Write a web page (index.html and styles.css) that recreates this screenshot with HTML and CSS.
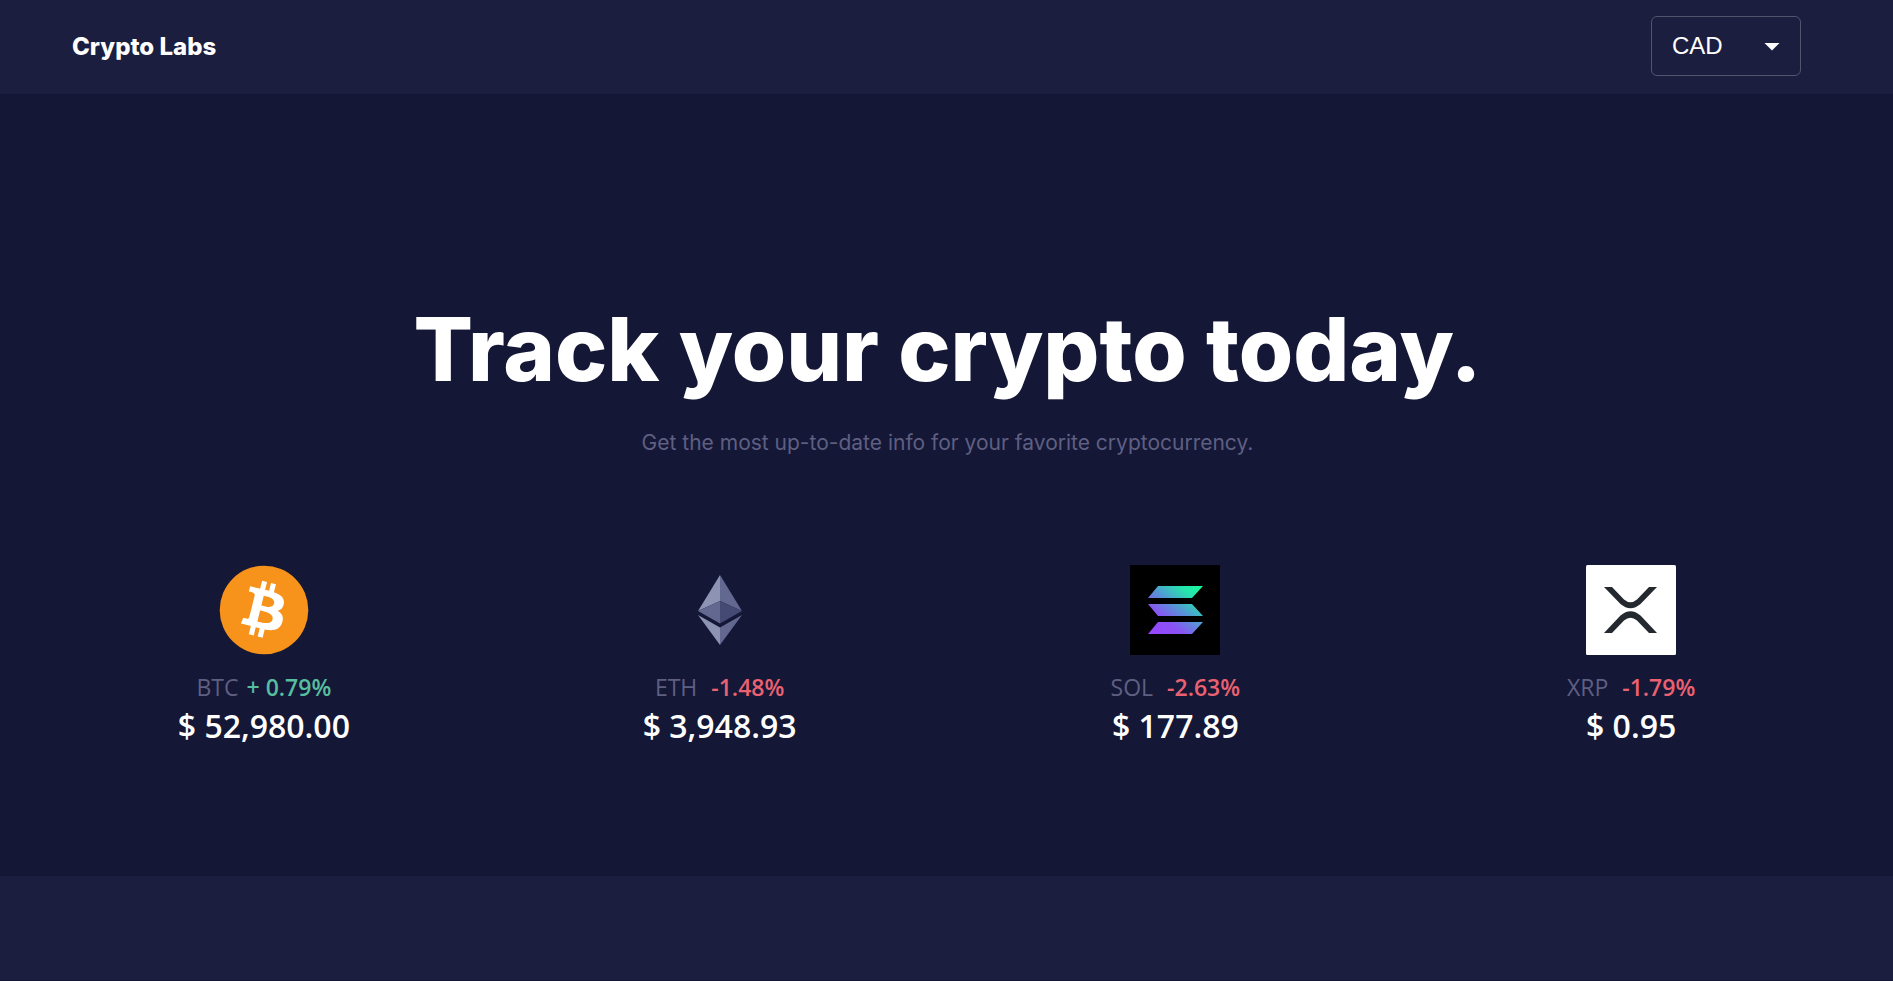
FILE: index.html
```html
<!DOCTYPE html>
<html lang="en">
<head>
<meta charset="utf-8">
<meta name="viewport" content="width=device-width, initial-scale=1">
<title>Crypto Labs</title>
<link rel="stylesheet" href="styles.css">
</head>
<body>
<header class="topbar">
  <a class="brand" href="#">Crypto Labs</a>
  <div class="currency">
    <select class="currency-select" aria-label="Currency">
      <option>CAD</option>
      <option>USD</option>
    </select>
    <svg class="currency-arrow" viewBox="0 0 36 36" aria-hidden="true"><path d="M10.500 15l7.500 7.500 7.500-7.500z" fill="#fff"/></svg>
  </div>
</header>
<main class="hero">
  <h1 class="title">Track your crypto today.</h1>
  <p class="subtitle">Get the most up-to-date info for your favorite cryptocurrency.</p>
  <div class="coins">
    <a class="coin" href="#">
      <svg class="coin-logo" viewBox="0 0 64 64" role="img" aria-label="Bitcoin">
        <circle cx="32" cy="32" r="31.500" fill="#f7931a"/>
        <path fill="#fff" d="M46.103 27.444c.637-4.258-2.605-6.547-7.038-8.074l1.438-5.768-3.511-.875-1.400 5.616c-.923-.230-1.871-.447-2.813-.662l1.410-5.653-3.509-.875-1.439 5.766c-.764-.174-1.514-.346-2.242-.527l.004-.018-4.842-1.209-.934 3.750s2.605.597 2.550.634c1.422.355 1.679 1.296 1.636 2.042l-1.638 6.571c.098.025.225.061.365.117l-.371-.092-2.296 9.205c-.174.432-.615 1.080-1.609.834.035.051-2.552-.637-2.552-.637l-1.743 4.019 4.569 1.139c.850.213 1.683.436 2.503.646l-1.453 5.834 3.507.875 1.439-5.772c.958.260 1.888.500 2.798.726l-1.434 5.745 3.511.875 1.453-5.823c5.987 1.133 10.489.676 12.384-4.739 1.527-4.360-.076-6.875-3.226-8.515 2.294-.529 4.022-2.038 4.483-5.155zM38.081 38.693c-1.085 4.360-8.426 2.003-10.806 1.412l1.928-7.729c2.380.594 10.012 1.770 8.878 6.317zM39.167 27.381c-.990 3.966-7.100 1.951-9.082 1.457l1.748-7.010c1.982.494 8.365 1.416 7.334 5.553z"/>
      </svg>
      <span class="quote quote-up"><span class="symbol">BTC</span> <span class="change">+ 0.79%</span></span>
      <span class="price">$ 52,980.00</span>
    </a>
    <a class="coin" href="#">
      <svg class="coin-logo" viewBox="0 0 90 90" role="img" aria-label="Ethereum">
        <path fill="#8c93b3" d="M45 10L23 46l22-10z"/>
        <path fill="#636890" d="M45 10l22 36-22-10z"/>
        <path fill="#626890" d="M23 46l22-10v22.500z"/>
        <path fill="#454a75" d="M67 46L45 36v22.500z"/>
        <path fill="#8c93b3" d="M23 50l22 12.500V80z"/>
        <path fill="#636890" d="M67 50L45 62.500V80z"/>
      </svg>
      <span class="quote quote-down"><span class="symbol">ETH</span> <span class="change">-1.48%</span></span>
      <span class="price">$ 3,948.93</span>
    </a>
    <a class="coin" href="#">
      <svg class="coin-logo" viewBox="0 0 90 90" role="img" aria-label="Solana">
        <defs>
          <linearGradient id="sol" gradientUnits="userSpaceOnUse" x1="24" y1="72" x2="66" y2="18">
            <stop offset="0" stop-color="#9945ff"/>
            <stop offset=".3" stop-color="#8a53f4"/>
            <stop offset=".55" stop-color="#5497d5"/>
            <stop offset=".8" stop-color="#28e0b0"/>
            <stop offset="1" stop-color="#19fb9b"/>
          </linearGradient>
        </defs>
        <path d="M0 0h90v90H0z"/>
        <path fill="url(#sol)" d="M28 21h45L62 33H18zM18 39h44l11 12H28zM28 57h45L62 69H18z"/>
      </svg>
      <span class="quote quote-down"><span class="symbol">SOL</span> <span class="change">-2.63%</span></span>
      <span class="price">$ 177.89</span>
    </a>
    <a class="coin" href="#">
      <svg class="coin-logo" viewBox="0 0 90 90" role="img" aria-label="XRP">
        <rect width="90" height="90" rx="1.500" fill="#fff"/>
        <path fill="#23292f" d="M18 22h8l12 12.500q6.500 5.500 13 0L63 22h8L54.500 39q-10 8.500-20 0zM18 68h8l12-12.500q6.500-5.500 13 0L63 68h8L54.500 50.500q-10-8.500-20 0z"/>
      </svg>
      <span class="quote quote-down"><span class="symbol">XRP</span> <span class="change">-1.79%</span></span>
      <span class="price">$ 0.95</span>
    </a>
  </div>
</main>
</body>
</html>
```
FILE: styles.css
```css
* { box-sizing: border-box; }

body {
  margin: 0;
  min-height: 100vh;
  border-bottom: 1px solid #141736;
  background: #1b1e3f;
  color: #fff;
  font-family: Inter, "Liberation Sans", sans-serif;
}

a { color: inherit; text-decoration: none; }

.topbar {
  display: flex;
  align-items: center;
  justify-content: space-between;
  padding: 16px 92px 18px 72px;
}

.brand { padding-top: 2px; font-size: 24px; font-weight: 800; line-height: 32px; }

.currency { position: relative; width: 150px; }

.currency-select {
  display: block;
  width: 100%;
  height: 60px;
  padding: 0 48px 2px 20px;
  appearance: none;
  border: 1px solid #52536d;
  border-radius: 6px;
  background: transparent;
  color: #fff;
  font-family: "Liberation Sans", Arial, sans-serif;
  font-size: 24px;
}

.currency-select option { color: #14172f; }

.currency-arrow {
  position: absolute;
  top: 12px;
  right: 11px;
  width: 36px;
  height: 36px;
  pointer-events: none;
}

.hero {
  padding: 203px 34px 128px 36px;
  background: #141736;
  text-align: center;
}

.title { margin: 0; font-size: 88px; font-weight: 800; line-height: 104px; }

.subtitle {
  margin: 26px 0 0;
  color: #5f5f82;
  font-size: 21px;
  line-height: 32px;
}

.coins {
  display: grid;
  grid-template-columns: repeat(4, 1fr);
  margin-top: 106px;
}

.coin {
  display: flex;
  flex-direction: column;
  align-items: center;
  font-family: "Open Sans", "Noto Sans", sans-serif;
}

.coin-logo { width: 90px; height: 90px; margin-bottom: 15px; }

.quote { display: flex; gap: 14px; font-size: 23px; line-height: 34px; }
.quote-up { gap: 8px; }
.symbol { color: #5f5f82; }
.change { font-weight: 600; }
.quote-up .change { color: #57bd9f; }
.quote-down .change { color: #ea6171; }

.price { font-size: 32px; font-weight: 600; line-height: 44px; }
```
